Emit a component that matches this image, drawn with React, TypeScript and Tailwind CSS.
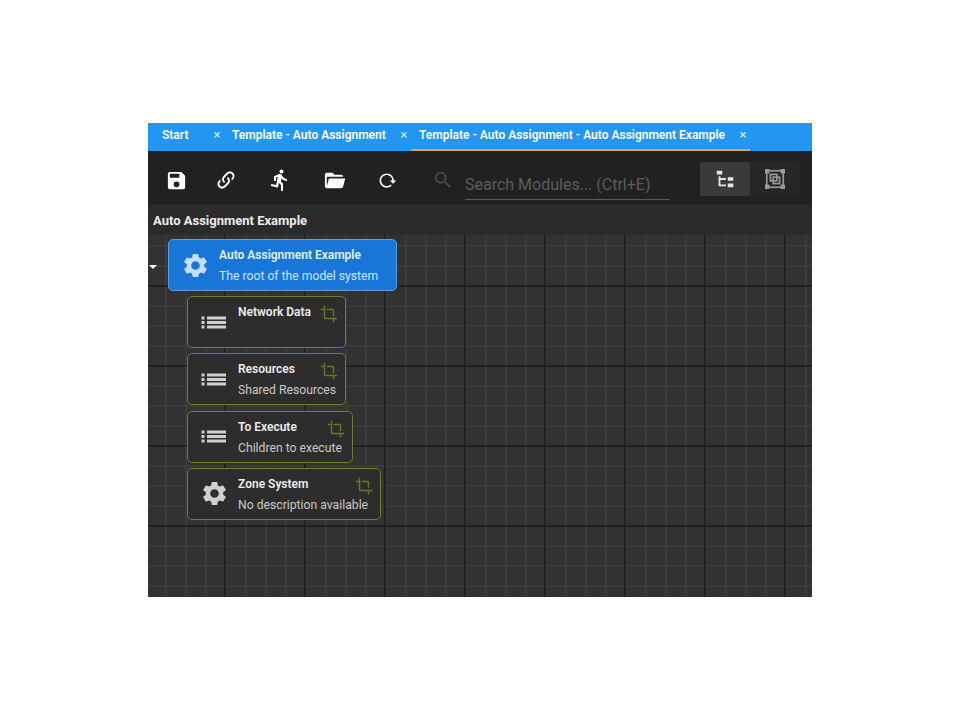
const paths = {
  save: "M15,9H5V5H15M12,19A3,3 0 0,1 9,16A3,3 0 0,1 12,13A3,3 0 0,1 15,16A3,3 0 0,1 12,19M17,3H5C3.89,3 3,3.9 3,5V19A2,2 0 0,0 5,21H19A2,2 0 0,0 21,19V7L17,3Z",
  link: "M10.59,13.41C11,13.8 11,14.44 10.59,14.83C10.2,15.22 9.56,15.22 9.17,14.83C7.22,12.88 7.22,9.71 9.17,7.76V7.76L12.71,4.22C14.66,2.27 17.83,2.27 19.78,4.22C21.73,6.17 21.73,9.34 19.78,11.29L18.29,12.78C18.3,11.96 18.17,11.14 17.89,10.36L18.36,9.88C19.54,8.71 19.54,6.81 18.36,5.64C17.19,4.46 15.29,4.46 14.12,5.64L10.59,9.17C9.41,10.34 9.41,12.24 10.59,13.41M13.41,9.17C13.8,8.78 14.44,8.78 14.83,9.17C16.78,11.12 16.78,14.29 14.83,16.24V16.24L11.29,19.78C9.34,21.73 6.17,21.73 4.22,19.78C2.27,17.83 2.27,14.66 4.22,12.71L5.71,11.22C5.7,12.04 5.83,12.86 6.11,13.65L5.64,14.12C4.46,15.29 4.46,17.19 5.64,18.36C6.81,19.54 8.71,19.54 9.88,18.36L13.41,14.83C14.59,13.66 14.59,11.76 13.41,10.59C13,10.2 13,9.56 13.41,9.17Z",
  run: "M13.5,5.5C14.59,5.5 15.5,4.58 15.5,3.5C15.5,2.38 14.59,1.5 13.5,1.5C12.39,1.5 11.5,2.38 11.5,3.5C11.5,4.58 12.39,5.5 13.5,5.5M9.89,19.38L10.89,15L13,17V23H15V15.5L12.89,13.5L13.5,10.5C14.79,12 16.79,13 19,13V11C17.09,11 15.5,10 14.69,8.58L13.69,7C13.29,6.38 12.69,6 12,6C11.69,6 11.5,6.08 11.19,6.08L6,8.28V13H8V9.58L9.79,8.88L8.19,17L3.29,16L2.89,18L9.89,19.38Z",
  folder: "M19,20H4C2.89,20 2,19.1 2,18V6C2,4.89 2.89,4 4,4H10L12,6H19A2,2 0 0,1 21,8H21L4,8V18L6.14,10H23.21L20.93,18.5C20.7,19.37 19.92,20 19,20Z",
  reload: "M2 12C2 16.97 6.03 21 11 21C13.39 21 15.68 20.06 17.4 18.4L15.9 16.9C14.63 18.25 12.86 19 11 19C4.76 19 1.64 11.46 6.05 7.05C10.46 2.64 18 5.77 18 12H15L19 16H19.1L23 12H20C20 7.03 15.97 3 11 3C6.03 3 2 7.03 2 12Z",
  search: "M9.5,3A6.5,6.5 0 0,1 16,9.5C16,11.11 15.41,12.59 14.44,13.73L14.71,14H15.5L20.5,19L19,20.5L14,15.5V14.71L13.73,14.44C12.59,15.41 11.11,16 9.5,16A6.5,6.5 0 0,1 3,9.5A6.5,6.5 0 0,1 9.5,3M9.5,5C7,5 5,7 5,9.5C5,12 7,14 9.5,14C12,14 14,12 14,9.5C14,7 12,5 9.5,5Z",
  tree: "M3,3H9V7H3V3M15,10H21V14H15V10M15,17H21V21H15V17M13,13H7V18H13V20H7L5,20V9H7V11H13V13Z",
  crop: "M17 15h2V7c0-1.1-.9-2-2-2H9v2h8v8zM7 17V1H5v4H1v2h4v10c0 1.1.9 2 2 2h10v4h2v-4h4v-2H7z",
  cog: "M19.14 12.94c.04-.3.06-.61.06-.94 0-.32-.02-.64-.07-.94l2.03-1.58c.18-.14.23-.41.12-.61l-1.92-3.32c-.12-.22-.37-.29-.59-.22l-2.39.96c-.5-.38-1.03-.7-1.62-.94l-.36-2.54c-.04-.24-.24-.41-.48-.41h-3.84c-.24 0-.43.17-.47.41l-.36 2.54c-.59.24-1.13.57-1.62.94l-2.39-.96c-.22-.08-.47 0-.59.22L2.74 8.87c-.12.21-.08.47.12.61l2.03 1.58c-.05.3-.09.63-.09.94s.02.64.07.94l-2.03 1.58c-.18.14-.23.41-.12.61l1.92 3.32c.12.22.37.29.59.22l2.39-.96c.5.38 1.03.7 1.62.94l.36 2.54c.05.24.24.41.48.41h3.84c.24 0 .44-.17.47-.41l.36-2.54c.59-.24 1.13-.56 1.62-.94l2.39.96c.22.08.47 0 .59-.22l1.92-3.32c.12-.22.07-.47-.12-.61l-2.01-1.58zM12 15.6c-1.98 0-3.6-1.62-3.6-3.6s1.62-3.6 3.6-3.6 3.6 1.62 3.6 3.6-1.62 3.6-3.6 3.6z",
};

const Icon = ({ d, className }: { d: string; className: string }) => (
  <svg viewBox="0 0 24 24" fill="currentColor" className={className}>
    <path d={d} />
  </svg>
);

const ListIcon = () => (
  <svg viewBox="0 0 25 13" fill="currentColor" className="h-[13px] w-[25px] text-[#cfcfcf]">
    <path d="M0.5 0.5h3v3h-3zM6 0.5h19v3H6zM0.5 5h3v3h-3zM6 5h19v3H6zM0.5 9.5h3v3h-3zM6 9.5h19v3H6z" />
  </svg>
);

const Tab = ({ title, width, active }: { title: string; width: string; active?: boolean }) => (
  <div className={`flex h-full items-center border-b-2 pl-2 ${width} ${active ? "border-[#e2a93b]" : "border-transparent"}`}>
    <span className="flex-1 truncate pb-[2px] text-[12px] font-semibold text-white">{title}</span>
    <span className="w-[14px] pb-[2px] text-center text-[13px] text-[#dbeeff]">×</span>
  </div>
);

const ModuleNode = ({
  icon,
  title,
  description,
  width,
}: {
  icon: "list" | "cog";
  title: string;
  description: string;
  width: string;
}) => (
  <div className={`ml-[39px] flex h-[52px] rounded-[5px] border border-[#6b7f30] bg-[#2d2d2d] ${width}`}>
    <div className="flex w-[50px] shrink-0 items-center justify-center">
      {icon === "cog" ? <Icon d={paths.cog} className="ml-[2px] h-[29px] w-[29px] text-[#cfcfcf]" /> : <ListIcon />}
    </div>
    <div className="flex flex-1 flex-col pr-[7px] pt-[6px]">
      <div className="flex h-[18px] items-start justify-between">
        <span className="text-[12px] font-semibold leading-[18px] text-[#ececec]">{title}</span>
        <Icon d={paths.crop} className="mt-[2px] h-[18px] w-[18px] text-[#64792d]" />
      </div>
      <span className="mt-[3px] whitespace-nowrap text-[12.2px] leading-[18px] text-[#c9c9c9]">{description}</span>
    </div>
  </div>
);

export default function App() {
  return (
    <div className="h-[720px] w-[960px] bg-white pl-[148px] pt-[123px] font-['Roboto',sans-serif]">
      <div className="flex h-[474px] w-[664px] flex-col bg-[#2f2f2f]">
        <div className="flex h-[28px] items-center bg-[#2196f3] pl-[6px]">
          <Tab title="Start" width="w-[70px]" />
          <Tab title="Template - Auto Assignment" width="w-[187px]" />
          <Tab title="Template - Auto Assignment - Auto Assignment Example" width="w-[339px]" active />
        </div>

        <div className="flex h-[54px] items-center bg-[#212121] pt-[2px] text-white">
          <div className="flex w-[56px] justify-center pt-[2px]"><Icon d={paths.save} className="h-[23px] w-[23px]" /></div>
          <div className="flex w-[44px] justify-center pt-[2px]"><Icon d={paths.link} className="h-[22px] w-[22px]" /></div>
          <div className="flex w-[64px] justify-center pt-[2px]"><Icon d={paths.run} className="h-[24px] w-[24px]" /></div>
          <div className="flex w-[45px] justify-center pt-[2px]"><Icon d={paths.folder} className="h-[23px] w-[23px]" /></div>
          <div className="flex w-[61px] justify-center pt-[2px]"><Icon d={paths.reload} className="h-[19px] w-[19px]" /></div>
          <Icon d={paths.search} className="ml-[14px] mt-[2px] h-[22px] w-[22px] text-[#4a4a4a]" />
          <div className="mb-[5px] ml-[11px] flex h-[29px] w-[205px] items-end self-end border-b border-[#5a5a5a] pb-[4px] text-[16px] leading-[20px] text-[#5c5c5c]">
            Search Modules... (Ctrl+E)
          </div>
          <div className="ml-[30px] flex h-[34px] w-[100px] rounded-[2px] bg-[#262626]">
            <div className="flex w-[50px] items-center justify-center rounded-[2px] bg-[#3a3a3a]">
              <Icon d={paths.tree} className="h-[22px] w-[22px] text-[#e6e6e6]" />
            </div>
            <div className="flex w-[50px] items-center justify-center">
              <svg viewBox="0 0 24 24" fill="none" stroke="#9a9a9a" strokeWidth="1.8" className="h-[22px] w-[22px]">
                <rect x="3" y="3" width="18" height="18" />
                <path d="M2 2h3v3H2zM19 2h3v3h-3zM2 19h3v3H2zM19 19h3v3h-3z" fill="#9a9a9a" />
                <rect x="7" y="7" width="7" height="7" />
                <rect x="10" y="10" width="7" height="7" />
              </svg>
            </div>
          </div>
        </div>

        <div className="flex h-[30px] items-center bg-[#2b2b2b] pl-[5px] pt-[2px] text-[13px] font-bold text-[#ececec]">
          Auto Assignment Example
        </div>

        <div className="flex flex-1 flex-col gap-[5.2px] bg-[#323232] bg-[linear-gradient(#212121_2px,transparent_2px),linear-gradient(90deg,#212121_2px,transparent_2px),linear-gradient(#3b3b3b_2px,transparent_2px),linear-gradient(90deg,#3b3b3b_2px,transparent_2px)] bg-[size:80px_80px,80px_80px,20px_20px,20px_20px] bg-[position:-3px_50px,-4px_-3px,-3px_10px,-3px_-3px] pt-[4px]">
          <div className="flex h-[52px] items-center">
            <div className="flex w-[20px] pl-[1px] pt-[4px]">
              <div className="h-0 w-0 border-x-[4px] border-t-[4px] border-x-transparent border-t-white" />
            </div>
            <div className="flex h-[52px] w-[229px] rounded-[5px] border border-[#5b9ee0] bg-[#1976d9]">
              <div className="flex w-[50px] shrink-0 items-center justify-center">
                <Icon d={paths.cog} className="ml-[2px] h-[29px] w-[29px] text-[#c6e0fb]" />
              </div>
              <div className="flex flex-col pt-[6px]">
                <span className="text-[12px] font-semibold leading-[18px] text-[#e3f1ff]">Auto Assignment Example</span>
                <span className="mt-[3px] whitespace-nowrap text-[12.2px] leading-[18px] text-[#cfe5fb]">The root of the model system</span>
              </div>
            </div>
          </div>
          <ModuleNode icon="list" title="Network Data" description="" width="w-[159px]" />
          <ModuleNode icon="list" title="Resources" description="Shared Resources" width="w-[159px]" />
          <ModuleNode icon="list" title="To Execute" description="Children to execute" width="w-[166px]" />
          <ModuleNode icon="cog" title="Zone System" description="No description available" width="w-[194px]" />
        </div>
      </div>
    </div>
  );
}
